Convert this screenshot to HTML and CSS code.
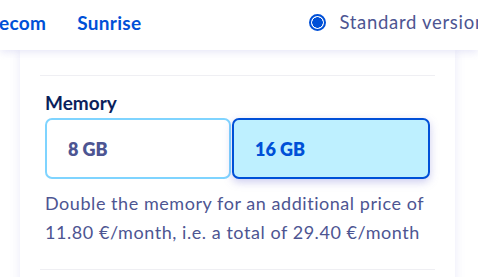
FILE: index.html
```html
<!DOCTYPE html>
<html>
<head>
<meta charset="utf-8">
<link rel="stylesheet" href="styles.css">
</head>
<body>
<header class="topbar">
  <nav class="nav">
    <a class="nav-link">ecom</a>
    <a class="nav-link">Sunrise</a>
  </nav>
  <label class="radio">
    <span class="radio-dot"></span>
    <span class="radio-text">Standard version</span>
  </label>
</header>
<main class="page">
  <section class="card">
    <div class="option">
      <div class="option-label">Memory</div>
      <div class="choices">
        <div class="choice">8 GB</div>
        <div class="choice choice-active">16 GB</div>
      </div>
      <p class="option-desc">Double the memory for an additional price of 11.80 €/month, i.e. a total of 29.40 €/month</p>
    </div>
  </section>
</main>
</body>
</html>
```
FILE: styles.css
```css
* { box-sizing: border-box; }
html, body { margin: 0; padding: 0; }
body {
  width: 478px;
  height: 277px;
  overflow: hidden;
  background: #fff;
  font-family: "Lato", "Open Sans", sans-serif;
  position: relative;
}
.topbar {
  height: 50px;
  padding-bottom: 6px;
  background: #fff;
  display: flex;
  align-items: center;
  box-shadow: 0 2px 8px rgba(110, 110, 210, 0.18);
  position: relative;
  z-index: 2;
  white-space: nowrap;
}
.nav { display: flex; gap: 31px; margin-left: -1px; }
.nav-link {
  color: #0050d7;
  font-weight: 700;
  font-size: 19px;
  letter-spacing: 0.3px;
}
.radio {
  display: flex;
  align-items: center;
  gap: 13px;
  margin-left: 168px;
  flex-shrink: 0;
}
.radio-dot {
  width: 17px;
  height: 17px;
  flex-shrink: 0;
  border-radius: 50%;
  border: 2px solid #0050d7;
  background: radial-gradient(circle, #0050d7 0 5px, #fff 5.5px);
}
.radio-text { color: #4d5592; font-size: 18.5px; letter-spacing: 0.7px; }
.page { padding: 0 23px 0 20px; }
.card {
  background: #fff;
  height: 240px;
  padding: 25px 20px 0;
  box-shadow: 0 0 10px rgba(110, 110, 210, 0.15);
}
.option {
  border-top: 1px solid #efeff3;
  border-bottom: 1px solid #efeff3;
  padding: 16px 5px 22px;
}
.option-label {
  color: #0b1f5c;
  font-weight: 700;
  font-size: 19px;
  line-height: 22px;
  margin-bottom: 4px;
}
.choices {
  display: grid;
  grid-template-columns: 186px 198px;
  gap: 1px;
}
.choice {
  height: 61px;
  border: 2px solid #7fd4ff;
  border-radius: 7px;
  display: flex;
  align-items: center;
  padding-left: 21px;
  font-weight: 800;
  font-size: 18px;
  color: #4d5592;
}
.choice-active {
  border-color: #0050d7;
  background: #bef0ff;
  color: #0050d7;
  box-shadow: 0 3px 8px rgba(110, 110, 210, 0.35);
}
.option-desc {
  margin: 10px 0 0;
  color: #4d5592;
  font-size: 18px;
  line-height: 29px;
  letter-spacing: 0.55px;
}
```
